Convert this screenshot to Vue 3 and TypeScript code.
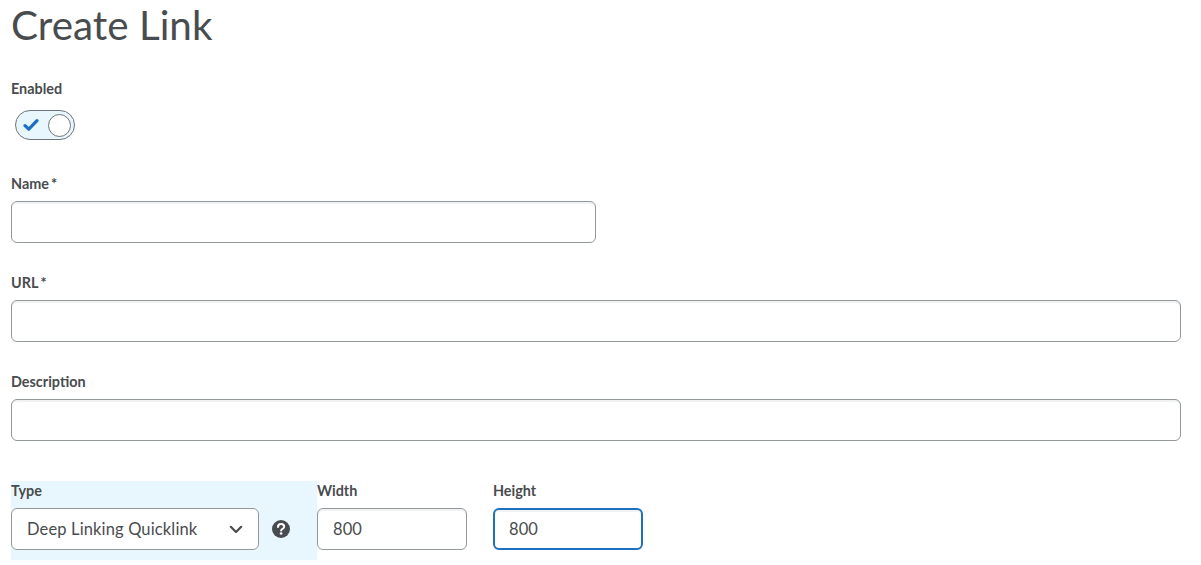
<script setup lang="ts">
const width: string = '800'
const height: string = '800'
</script>

<template>
  <main class="page">
    <h1 class="title">Create Link</h1>

    <section class="enabled">
      <div class="label">Enabled</div>
      <div class="toggle">
        <svg class="check" width="16" height="14" viewBox="0 0 16 14" aria-hidden="true">
          <path d="M2 7.6 L5.8 11.2 L14 2.6" fill="none" stroke="#1f6fc0" stroke-width="3.2" stroke-linecap="round" stroke-linejoin="round" />
        </svg>
        <span class="knob"></span>
      </div>
    </section>

    <section class="field">
      <label class="label">Name<span class="star">*</span></label>
      <input class="input name" type="text" />
    </section>

    <section class="field">
      <label class="label">URL<span class="star">*</span></label>
      <input class="input" type="text" />
    </section>

    <section class="field">
      <label class="label">Description</label>
      <input class="input" type="text" />
    </section>

    <section class="bottom">
      <div class="type">
        <label class="label">Type</label>
        <div class="type-row">
          <div class="select">
            <span>Deep Linking Quicklink</span>
            <svg width="14" height="9" viewBox="0 0 14 9" aria-hidden="true">
              <path d="M1.8 1.8 L7 7 L12.2 1.8" fill="none" stroke="#494c4e" stroke-width="2.2" stroke-linecap="round" stroke-linejoin="round" />
            </svg>
          </div>
          <svg class="help" width="18" height="18" viewBox="0 0 18 18" aria-hidden="true">
            <circle cx="9" cy="9" r="9" fill="#494c4e" />
            <path d="M6 7 C6 5 7.4 4.1 9.1 4.1 C10.9 4.1 12.2 5.2 12.2 6.7 C12.2 8.9 9.1 8.8 9.1 10.6" fill="none" stroke="#fff" stroke-width="2" stroke-linecap="round" />
            <circle cx="9.1" cy="13.5" r="1.3" fill="#fff" />
          </svg>
        </div>
      </div>
      <div class="small">
        <label class="label">Width</label>
        <input class="input" type="text" :value="width" />
      </div>
      <div class="small second">
        <label class="label">Height</label>
        <input class="input focus" type="text" :value="height" />
      </div>
    </section>
  </main>
</template>

<style scoped>
.page {
  box-sizing: border-box;
  width: 1201px;
  height: 565px;
  padding: 0 20px 0 11px;
  overflow: hidden;
  background: #fff;
  color: #494c4e;
  font-family: Lato, "Open Sans", sans-serif;
}
.title {
  margin: 0 0 27px;
  height: 52px;
  font-size: 40.4px;
  font-weight: 400;
  line-height: 50px;
}
.label {
  display: block;
  height: 20px;
  margin-bottom: 7px;
  font-size: 14.4px;
  font-weight: 700;
  line-height: 20px;
}
.star {
  margin-left: 2px;
  font-weight: 700;
}
.enabled {
  margin-bottom: 34px;
}
.enabled .label {
  margin-bottom: 11px;
}
.toggle {
  box-sizing: border-box;
  display: flex;
  align-items: center;
  justify-content: space-between;
  width: 60px;
  height: 30px;
  margin-left: 4px;
  padding: 0 3px 0 7px;
  border: 1.5px solid #6e7477;
  border-radius: 15px;
  background: #e8f6fd;
}
.knob {
  box-sizing: border-box;
  width: 23px;
  height: 23px;
  border: 1.5px solid #6e7477;
  border-radius: 50%;
  background: #fff;
}
.field {
  margin-bottom: 30px;
}
.input {
  box-sizing: border-box;
  display: block;
  width: 100%;
  height: 42px;
  padding: 0 15px;
  border: 1.5px solid #93989b;
  border-radius: 6px;
  outline: none;
  background: #fff;
  color: #494c4e;
  font-family: inherit;
  font-size: 16.5px;
  letter-spacing: 0.1px;
  box-shadow: inset 0 2px 0 rgba(181, 189, 194, 0.2);
}
.name {
  width: 585px;
}
.bottom {
  display: flex;
  margin-top: 40px;
}
.type {
  box-sizing: border-box;
  width: 306px;
  height: 79px;
  background: #e8f6fd;
}
.type-row {
  display: flex;
  align-items: center;
  gap: 13px;
}
.select {
  box-sizing: border-box;
  display: flex;
  align-items: center;
  justify-content: space-between;
  width: 248px;
  height: 42px;
  padding: 0 15px;
  border: 1.5px solid #93989b;
  border-radius: 6px;
  background: #fff;
  font-size: 16.5px;
  letter-spacing: 0.14px;
}
.small {
  width: 150px;
}
.second {
  margin-left: 26px;
}
.focus {
  border: 2px solid #1f6fc0;
  padding: 0 14px;
}
</style>

<style>
html,
body {
  margin: 0;
  background: #fff;
}
</style>
